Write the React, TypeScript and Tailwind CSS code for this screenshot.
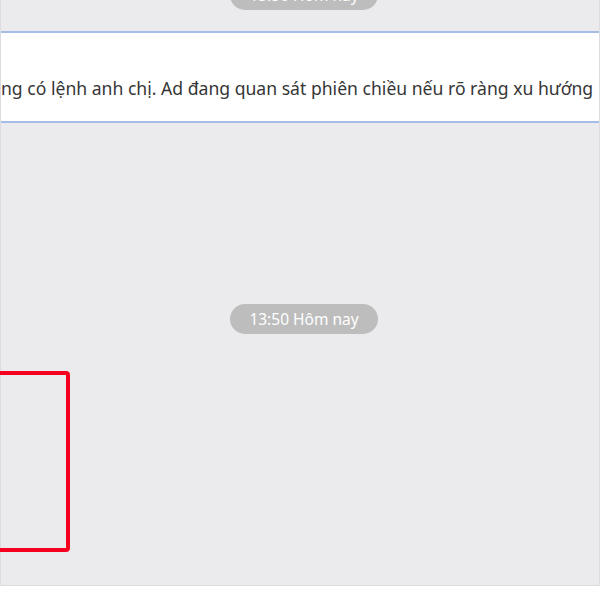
export default function App() {
  return (
    <div className="relative h-[600px] w-[600px] overflow-hidden bg-white font-['Noto_Sans',sans-serif]">
      <div className="flex h-[586px] flex-col border-x border-b border-[#dcdce0] bg-[#ebebee]">
        <div className="flex h-[31px] justify-center pl-[8px]">
          <span className="mt-[-20px] h-[30px] rounded-full bg-[#bdbdbd] px-[19px] text-[15.5px] leading-[30px] text-white">
            13:50 Hôm nay
          </span>
        </div>
        <div className="h-[92px] border-y-2 border-[#a6bde8] bg-white">
          <p className="whitespace-nowrap pt-[43px] text-[17.6px] leading-[24px] text-[#363636]">
            ng có lệnh anh chị. Ad đang quan sát phiên chiều nếu rõ ràng xu hướng
          </p>
        </div>
        <div className="flex justify-center pl-[8px] pt-[181px]">
          <span className="h-[30px] rounded-full bg-[#bdbdbd] px-[19px] text-[15.5px] leading-[30px] text-white">
            13:50 Hôm nay
          </span>
        </div>
        <div className="ml-[-12px] mt-[37px] h-[181px] w-[81px] rounded-[4px] border-4 border-[#f5001e]" />
      </div>
    </div>
  );
}
